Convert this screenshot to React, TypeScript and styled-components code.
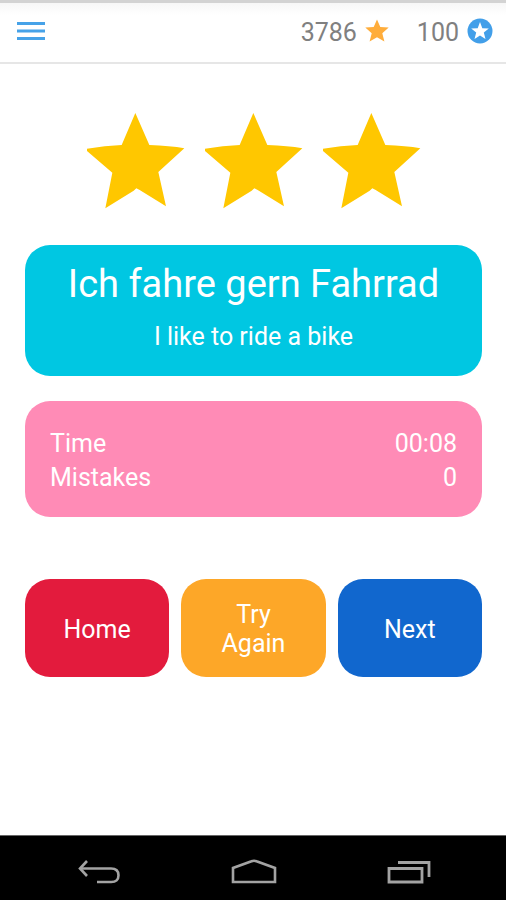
import React from "react";
import styled, { createGlobalStyle } from "styled-components";

const GlobalStyle = createGlobalStyle`
  *, *::before, *::after { box-sizing: border-box; }
  body {
    margin: 0;
    background: #ffffff;
    font-family: Roboto, "Liberation Sans", sans-serif;
  }
`;

const Screen = styled.div`
  min-height: 100vh;
  display: flex;
  flex-direction: column;
`;

const Header = styled.header`
  display: flex;
  align-items: center;
  justify-content: space-between;
  height: 64px;
  padding: 0 13px 3px 12px;
  border-top: 3px solid #d3d3d3;
  border-bottom: 2px solid #e6e6e6;
  background: linear-gradient(#f7f7f7, #ffffff 12px);
`;

const IconButton = styled.button`
  display: flex;
  align-items: center;
  justify-content: center;
  padding: 4px;
  border: 0;
  background: transparent;
  cursor: pointer;
`;

const Balances = styled.div`
  display: flex;
  align-items: center;
  gap: 28px;
`;

const Balance = styled.div`
  display: flex;
  align-items: center;
  gap: 8px;
`;

const Amount = styled.span`
  padding-top: 3px;
  color: #808080;
  font-size: 25px;
  line-height: 30px;
`;

const Main = styled.main`
  flex: 1;
  display: flex;
  flex-direction: column;
  padding: 48px 24px 24px 25px;
`;

const Rating = styled.div`
  display: flex;
  justify-content: center;
  gap: 19px;
  margin-bottom: 36px;
`;

const Card = styled.section<{ $color: string }>`
  padding: 26px 25px 22px;
  border-radius: 25px;
  background: ${(p) => p.$color};
  color: #ffffff;
`;

const PhraseCard = styled(Card)`
  padding: 16px 16px 23px;
  margin-bottom: 25px;
  text-align: center;
`;

const Phrase = styled.h1`
  margin: 0 0 13px;
  font-size: 38px;
  font-weight: 400;
  line-height: 46px;
`;

const Translation = styled.p`
  margin: 0;
  font-size: 25px;
  line-height: 33px;
`;

const Stats = styled.dl`
  margin: 0;
  font-size: 25px;
  line-height: 34px;
`;

const Stat = styled.div`
  display: flex;
  justify-content: space-between;
`;

const StatValue = styled.dd`
  margin: 0;
`;

const Actions = styled.div`
  display: grid;
  grid-template-columns: repeat(3, 1fr);
  gap: 12px;
  margin-top: 62px;
`;

const ActionButton = styled.button<{ $color: string }>`
  min-height: 98px;
  padding: 18px 32px 16px;
  border: 0;
  border-radius: 25px;
  background: ${(p) => p.$color};
  color: #ffffff;
  font-family: inherit;
  font-size: 25px;
  line-height: 29px;
  cursor: pointer;
`;

const SystemBar = styled.nav`
  display: grid;
  grid-template-columns: repeat(3, 1fr);
  align-items: center;
  justify-items: center;
  height: 65px;
  padding: 8px 19px 0 21px;
  border-top: 1px solid #666666;
  background: #000000;
`;

const MenuIcon = () => (
  <svg width="30" height="22" viewBox="0 0 30 22" aria-hidden="true">
    <path d="M1 3.5H29M1 11H29M1 18.5H29" stroke="#46a2e8" strokeWidth="3" />
  </svg>
);

const StarIcon = () => (
  <svg width="24" height="24" viewBox="0 0 24 24" aria-hidden="true">
    <path
      d="M12 .5L15.3 8L23.7 8.6L17.3 14.2L19.4 22.5L12 18.2L4.6 22.5L6.7 14.2L.3 8.6L8.7 8Z"
      fill="#ffad3b"
    />
  </svg>
);

const CoinIcon = () => (
  <svg width="26" height="26" viewBox="0 0 26 26" aria-hidden="true">
    <circle cx="13" cy="13" r="12.5" fill="#429fe9" />
    <path
      d="M13 4L15.3 10.2L21.8 10.5L16.8 14.6L18.5 21L13 17.4L7.5 21L9.2 14.6L4.2 10.5L10.7 10.2Z"
      fill="#ffffff"
    />
  </svg>
);

const RatingStar = () => (
  <svg width="99" height="97" viewBox="48 33 297 291" aria-hidden="true">
    <path
      d="M196 36L238 132Q300 134 343 142L265 213L288 316L209 267L199 262L191 269L106 322L127 215L51 150L51 143Q105 134 155 132Z"
      fill="#ffc700"
    />
  </svg>
);

const BackIcon = () => (
  <svg width="44" height="26" viewBox="0 0 44 26" fill="none" stroke="#a3a3a3" strokeWidth="2.6" aria-hidden="true">
    <path d="M3 9.5H34Q41.5 9.5 41.5 16.3T34 23H20" />
    <path d="M10 2L3 9.5L10 17" />
  </svg>
);

const HomeIcon = () => (
  <svg width="46" height="26" viewBox="0 0 46 26" fill="none" stroke="#a3a3a3" strokeWidth="2.6" aria-hidden="true">
    <path d="M2 23V9L20.5 2.3Q23 1.2 25.5 2.3L44 9V23Z" />
  </svg>
);

const RecentsIcon = () => (
  <svg width="44" height="26" viewBox="0 0 44 26" fill="none" stroke="#a3a3a3" strokeWidth="2.8" aria-hidden="true">
    <path d="M2 9.5H35V23H2Z" />
    <path d="M11 3.5H42V18" />
  </svg>
);

const stats = [
  { label: "Time", value: "00:08" },
  { label: "Mistakes", value: "0" },
];

const actions = [
  { label: "Home", color: "#e31b3d" },
  { label: "Try Again", color: "#fda728" },
  { label: "Next", color: "#1167ce" },
];

export default function App() {
  return (
    <Screen>
      <GlobalStyle />
      <Header>
        <IconButton type="button" aria-label="Menu">
          <MenuIcon />
        </IconButton>
        <Balances>
          <Balance>
            <Amount>3786</Amount>
            <StarIcon />
          </Balance>
          <Balance>
            <Amount>100</Amount>
            <CoinIcon />
          </Balance>
        </Balances>
      </Header>
      <Main>
        <Rating role="img" aria-label="3 stars">
          <RatingStar />
          <RatingStar />
          <RatingStar />
        </Rating>
        <PhraseCard $color="#00c7e2">
          <Phrase lang="de">Ich fahre gern Fahrrad</Phrase>
          <Translation>I like to ride a bike</Translation>
        </PhraseCard>
        <Card $color="#ff8bb6">
          <Stats>
            {stats.map((s) => (
              <Stat key={s.label}>
                <dt>{s.label}</dt>
                <StatValue>{s.value}</StatValue>
              </Stat>
            ))}
          </Stats>
        </Card>
        <Actions>
          {actions.map((a) => (
            <ActionButton key={a.label} type="button" $color={a.color}>
              {a.label}
            </ActionButton>
          ))}
        </Actions>
      </Main>
      <SystemBar aria-label="System">
        <IconButton type="button" aria-label="Back">
          <BackIcon />
        </IconButton>
        <IconButton type="button" aria-label="Home screen">
          <HomeIcon />
        </IconButton>
        <IconButton type="button" aria-label="Recent apps">
          <RecentsIcon />
        </IconButton>
      </SystemBar>
    </Screen>
  );
}
